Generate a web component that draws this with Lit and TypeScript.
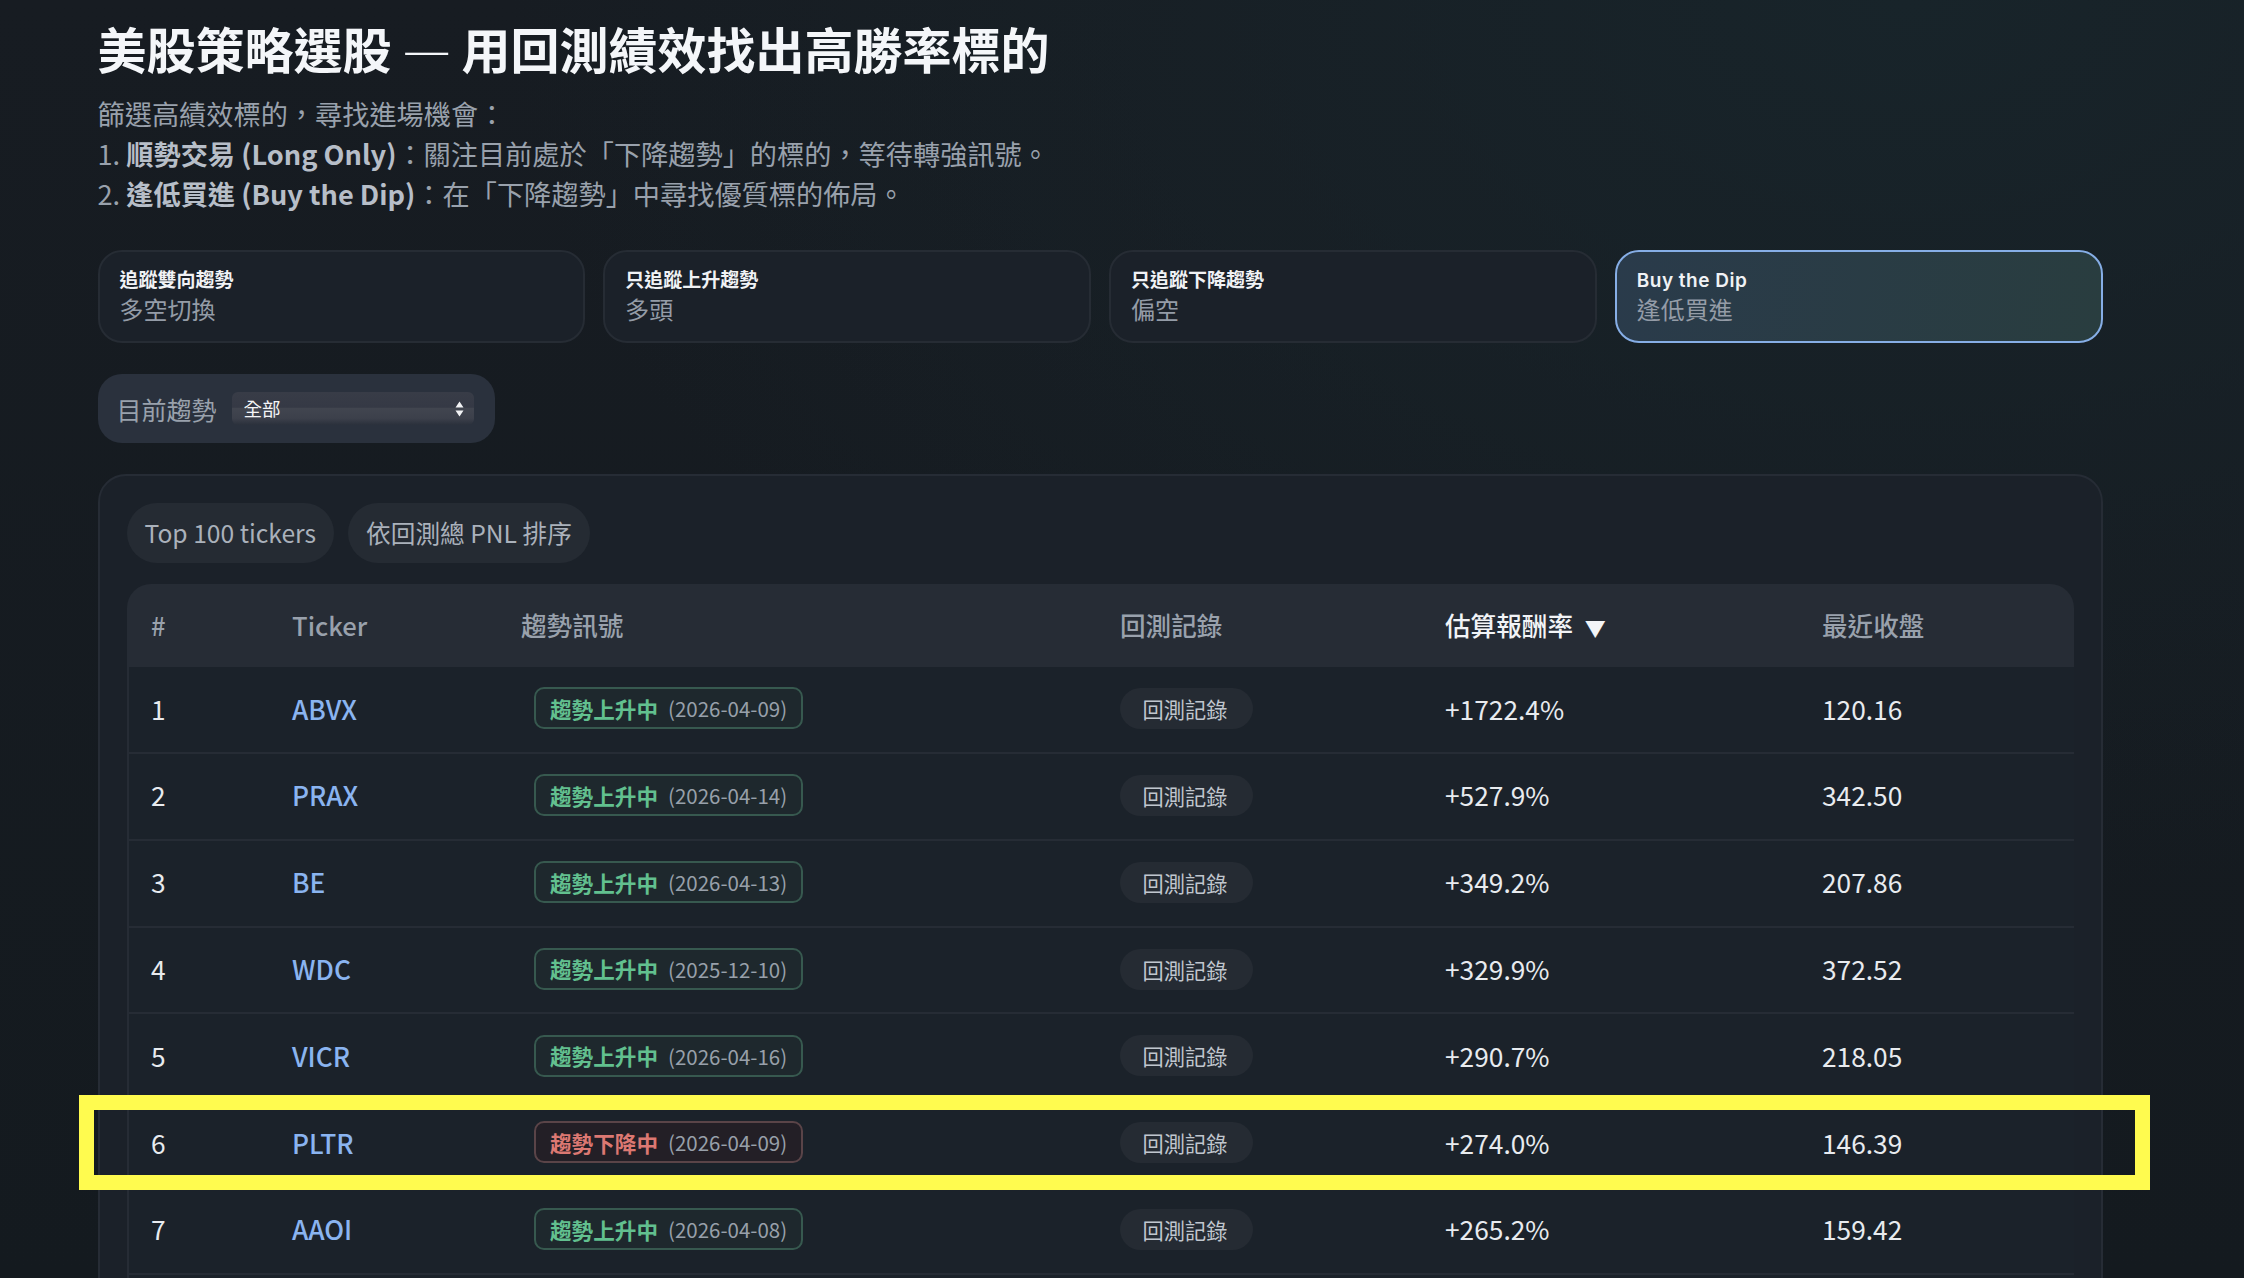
import { LitElement, css, html } from "lit";
import { customElement } from "lit/decorators.js";

const TABS = [
  { title: "追蹤雙向趨勢", sub: "多空切換" },
  { title: "只追蹤上升趨勢", sub: "多頭" },
  { title: "只追蹤下降趨勢", sub: "偏空" },
  { title: "Buy the Dip", sub: "逢低買進", active: true },
];

const ROWS = [
  { ticker: "ABVX", up: true, date: "2026-04-09", ret: "+1722.4%", close: "120.16" },
  { ticker: "PRAX", up: true, date: "2026-04-14", ret: "+527.9%", close: "342.50" },
  { ticker: "BE", up: true, date: "2026-04-13", ret: "+349.2%", close: "207.86" },
  { ticker: "WDC", up: true, date: "2025-12-10", ret: "+329.9%", close: "372.52" },
  { ticker: "VICR", up: true, date: "2026-04-16", ret: "+290.7%", close: "218.05" },
  { ticker: "PLTR", up: false, date: "2026-04-09", ret: "+274.0%", close: "146.39" },
  { ticker: "AAOI", up: true, date: "2026-04-08", ret: "+265.2%", close: "159.42" },
];

@customElement("app-root")
export class AppRoot extends LitElement {
  override render() {
    return html`
      <main>
        <h1>美股策略選股 <span class="dash">—</span> 用回測績效找出高勝率標的</h1>
        <p class="intro">
          篩選高績效標的，尋找進場機會：<br />
          1. <strong>順勢交易 (Long Only)</strong>：關注目前處於「下降趨勢」的標的，等待轉強訊號。<br />
          2. <strong>逢低買進 (Buy the Dip)</strong>：在「下降趨勢」中尋找優質標的佈局。
        </p>

        <div class="tabs">
          ${TABS.map(
            (t) => html`
              <div class="tab ${t.active ? "active" : ""}">
                <span class="tab-title">${t.title}</span>
                <span class="tab-sub">${t.sub}</span>
              </div>
            `
          )}
        </div>

        <div class="filter">
          <span class="filter-label">目前趨勢</span>
          <div class="select-wrap">
            <select>
              <option>全部</option>
            </select>
            <svg class="arrows" width="9" height="18" viewBox="0 0 9 18">
              <path d="M4.5 1.5 8.5 7.5H.5Z M4.5 16.5 .5 10.5H8.5Z" fill="#f2f3f5" />
            </svg>
          </div>
        </div>

        <section class="panel">
          <div class="pills">
            <span class="pill">Top 100 tickers</span>
            <span class="pill">依回測總 PNL 排序</span>
          </div>
          <div class="table-wrap">
            <table>
              <colgroup>
                <col class="c-rank" />
                <col class="c-ticker" />
                <col class="c-trend" />
                <col class="c-log" />
                <col class="c-ret" />
                <col class="c-close" />
              </colgroup>
              <thead>
                <tr>
                  <th>#</th>
                  <th>Ticker</th>
                  <th>趨勢訊號</th>
                  <th>回測記錄</th>
                  <th class="sorted">估算報酬率 <span class="sort-arrow">▼</span></th>
                  <th>最近收盤</th>
                </tr>
              </thead>
              <tbody>
                ${ROWS.map(
                  (r, i) => html`
                    <tr>
                      <td>${i + 1}</td>
                      <td><a class="ticker">${r.ticker}</a></td>
                      <td>
                        <span class="badge ${r.up ? "up" : "down"}">
                          <b>${r.up ? "趨勢上升中" : "趨勢下降中"}</b>
                          <span class="date">(${r.date})</span>
                        </span>
                      </td>
                      <td><span class="log-btn">回測記錄</span></td>
                      <td>${r.ret}</td>
                      <td>${r.close}</td>
                    </tr>
                  `
                )}
                <tr class="more"><td colspan="6"></td></tr>
              </tbody>
            </table>
          </div>
        </section>
      </main>
      <div class="highlight"></div>
    `;
  }

  static override styles = css`
    :host {
      display: block;
      position: relative;
      height: 1278px;
      overflow: hidden;
      font-family: "Noto Sans CJK TC", "Noto Sans", sans-serif;
      color: #e8ebef;
      background:
        radial-gradient(1400px 900px at 85% 0%, #18242a 0%, rgba(24, 36, 42, 0) 100%),
        linear-gradient(180deg, #171c22 0%, #141a1f 100%);
    }

    main {
      width: 2005px;
      margin-left: 97.5px;
      padding-top: 15px;
    }

    h1 {
      margin: 0;
      font-size: 49px;
      line-height: 66px;
      font-weight: 700;
      color: #f4f6f9;
    }

    .dash {
      font-size: 54px;
      font-weight: 300;
      line-height: 0;
    }

    .intro {
      margin: 12px 0 0;
      font-size: 27.2px;
      line-height: 40px;
      color: #99a1ac;
    }

    .intro strong {
      font-weight: 700;
      color: #b7bec8;
    }

    .tabs {
      display: grid;
      grid-template-columns: repeat(4, 1fr);
      gap: 18px;
      margin-top: 37px;
    }

    .tab {
      display: flex;
      flex-direction: column;
      justify-content: center;
      gap: 2px;
      box-sizing: border-box;
      height: 92.5px;
      padding: 0 20px;
      border: 2px solid #262c34;
      border-radius: 24px;
      background: #1b2129;
      font-family: Inter, "Noto Sans CJK TC", sans-serif;
    }

    .tab.active {
      border-color: #86aee6;
      background: linear-gradient(100deg, #2a3b4b 0%, #293d3f 100%);
    }

    .tab-title {
      padding-top: 2px;
      font-size: 19px;
      line-height: 26px;
      font-weight: 600;
      color: #f0f2f5;
    }

    .tab.active .tab-title {
      letter-spacing: 0.5px;
    }

    .tab-sub {
      font-size: 24px;
      line-height: 30px;
      color: #949ca7;
    }

    .filter {
      display: inline-flex;
      align-items: center;
      gap: 15px;
      box-sizing: border-box;
      width: 397px;
      height: 69px;
      margin-top: 31.5px;
      padding: 0 21px 0 19px;
      border-radius: 24px;
      background: #2a313d;
      vertical-align: top;
    }

    .filter-label {
      font-size: 25px;
      color: #99a1ac;
    }

    .select-wrap {
      position: relative;
      display: flex;
      flex: 1;
    }

    select {
      appearance: none;
      width: 100%;
      height: 33px;
      padding: 0 12px 2px;
      border: 0;
      border-radius: 6px;
      outline: 0;
      color: #f4f5f7;
      font-family: inherit;
      font-size: 18.6px;
      background: linear-gradient(180deg, #383c47 0%, #353945 46%, #41454f 50%, #3c404b 80%, #2a303b 100%);
    }

    .arrows {
      position: absolute;
      top: 8px;
      right: 10px;
    }

    .panel {
      box-sizing: border-box;
      margin-top: 31.3px;
      padding: 27px 27px 60px;
      border: 2px solid #262c35;
      border-radius: 28px;
      background: #1b2129;
    }

    .pills {
      display: flex;
      gap: 14px;
    }

    .pill {
      display: flex;
      align-items: center;
      height: 60px;
      padding: 0 18px 2px;
      box-sizing: border-box;
      border-radius: 30px;
      background: #252b33;
      font-size: 24.65px;
      color: #aab1bb;
    }

    .table-wrap {
      margin-top: 21px;
      border-radius: 24px 24px 0 0;
      overflow: hidden;
    }

    table {
      width: 1947px;
      table-layout: fixed;
      border-collapse: separate;
      border-spacing: 0;
      border-left: 2px solid #262c35;
      border-right: 2px solid #262c35;
    }

    .c-rank {
      width: 141px;
    }
    .c-ticker {
      width: 229px;
    }
    .c-trend {
      width: 599px;
    }
    .c-log {
      width: 325px;
    }
    .c-ret {
      width: 377px;
    }
    .c-close {
      width: 274px;
    }

    th {
      box-sizing: border-box;
      height: 83px;
      padding: 0 0 2px 22.5px;
      background: #262c35;
      text-align: left;
      font-size: 25.6px;
      font-weight: 500;
      color: #99a1ac;
    }

    th.sorted {
      color: #f2f4f7;
    }

    .sort-arrow {
      margin-left: 6px;
      font-size: 21px;
    }

    td {
      box-sizing: border-box;
      height: 86.8px;
      padding: 0 0 3px 22.5px;
      border-bottom: 2px solid #262c35;
      background: #1b222a;
      font-size: 26.3px;
      color: #e8ebef;
    }

    .ticker {
      font-weight: 500;
      color: #8ab4f0;
    }

    .badge {
      display: inline-flex;
      align-items: center;
      gap: 10px;
      box-sizing: border-box;
      height: 42px;
      margin-left: 13px;
      padding: 0 14px;
      border: 2px solid;
      border-radius: 10px;
      font-size: 21.6px;
    }

    .badge.up {
      border-color: #37594f;
      background: #1e282d;
      color: #62c08f;
    }

    .badge.down {
      border-color: #5a4448;
      background: #231f26;
      color: #dc7872;
    }

    .date {
      color: #98a0aa;
      font-size: 20.5px;
    }

    .log-btn {
      display: inline-flex;
      align-items: center;
      box-sizing: border-box;
      width: 133px;
      height: 41px;
      padding-right: 3px;
      justify-content: center;
      border-radius: 21px;
      background: #252b33;
      font-size: 21.2px;
      color: #c0c6ce;
    }

    .more td {
      height: 60px;
      border-bottom: 0;
    }

    .highlight {
      position: absolute;
      left: 79px;
      top: 1095px;
      width: 2071px;
      height: 95px;
      box-sizing: border-box;
      border: 15px solid #fffb4f;
    }
  `;
}

declare global {
  interface HTMLElementTagNameMap {
    "app-root": AppRoot;
  }
}
